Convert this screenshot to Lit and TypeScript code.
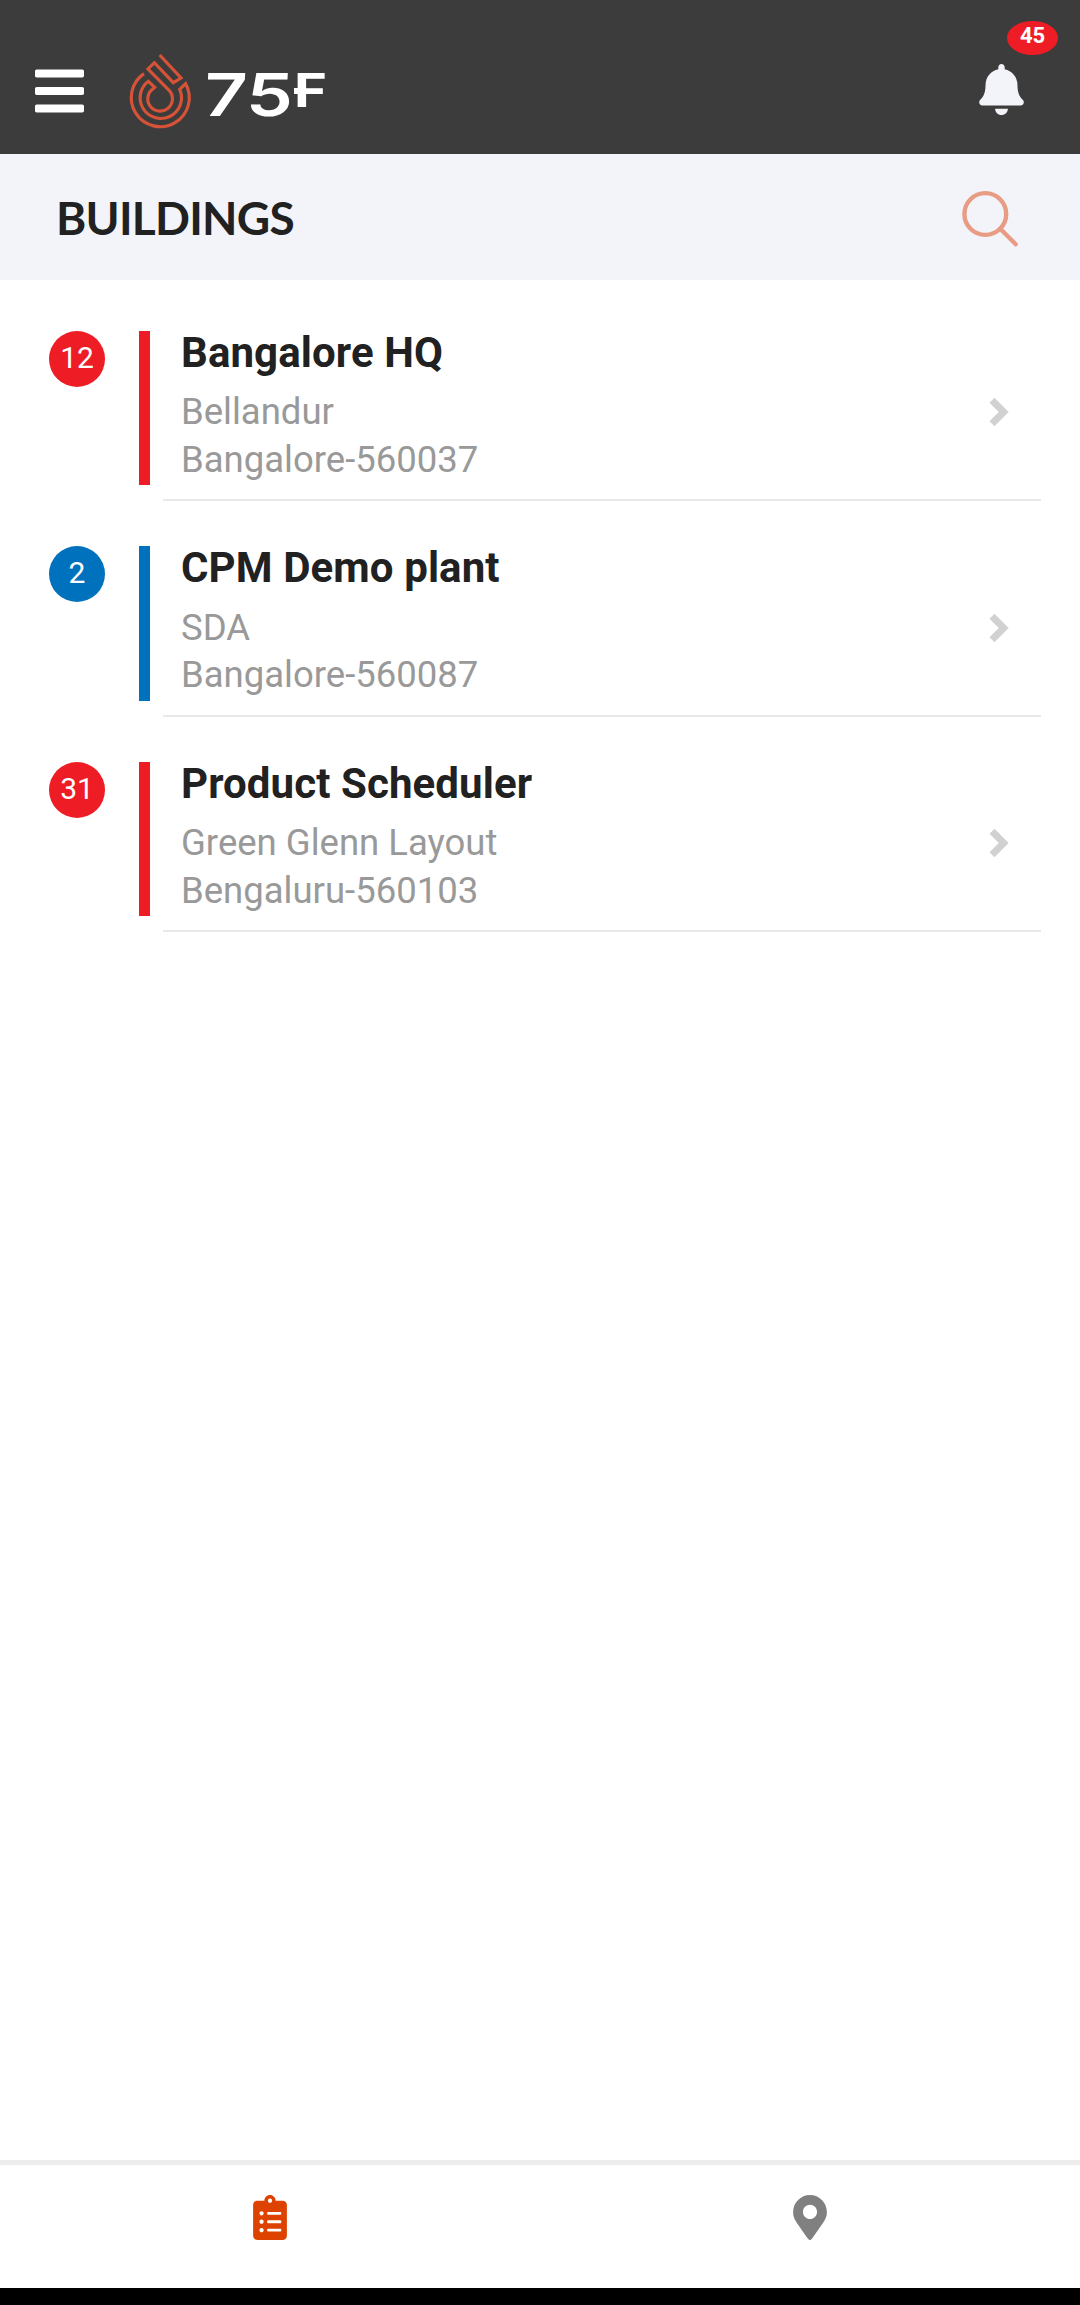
import { LitElement, html, css } from "lit";
import { customElement, property } from "lit/decorators.js";
import { classMap } from "lit/directives/class-map.js";

interface Building {
  alerts: number;
  severe: boolean;
  name: string;
  area: string;
  city: string;
}

const buildings: Building[] = [
  { alerts: 12, severe: true, name: "Bangalore HQ", area: "Bellandur", city: "Bangalore-560037" },
  { alerts: 2, severe: false, name: "CPM Demo plant", area: "SDA", city: "Bangalore-560087" },
  { alerts: 31, severe: true, name: "Product Scheduler", area: "Green Glenn Layout", city: "Bengaluru-560103" },
];

@customElement("app-header")
export class AppHeader extends LitElement {
  static styles = css`
    :host {
      display: flex;
      box-sizing: border-box;
      height: 154px;
      padding: 0 56px 0 35px;
      background: #3c3c3c;
      font-family: Roboto, sans-serif;
    }
    svg { display: block; }
    .menu { margin-top: 63px; width: 49px; height: 56px; }
    .drop { margin: 52px 0 0 43px; width: 68px; height: 80px; }
    .word { margin: 73px 0 0 12px; width: 122px; height: 46px; overflow: visible; }
    .digits { font: 600 59px Inter, sans-serif; fill: #fff; }
    .letter { font: 700 46.5px Inter, sans-serif; fill: #fff; }
    .alerts { position: relative; margin: 64px 0 0 auto; width: 45px; height: 51px; }
    .bell { width: 45px; height: 51px; }
    .count {
      position: absolute;
      left: 28px;
      top: -43px;
      width: 51px;
      height: 34px;
      line-height: 30px;
      border-radius: 50%;
      background: #ee1c25;
      color: #fff;
      font-size: 22px;
      font-weight: 700;
      text-align: center;
    }
  `;
  render() {
    return html`
      <svg class="menu" viewBox="0 0 448 512" fill="#fff">
        <path d="M16 132h416c8.837 0 16-7.163 16-16V76c0-8.837-7.163-16-16-16H16C7.163 60 0 67.163 0 76v40c0 8.837 7.163 16 16 16zm0 160h416c8.837 0 16-7.163 16-16v-40c0-8.837-7.163-16-16-16H16c-8.837 0-16 7.163-16 16v40c0 8.837 7.163 16 16 16zm0 160h416c8.837 0 16-7.163 16-16v-40c0-8.837-7.163-16-16-16H16c-8.837 0-16 7.163-16 16v40c0 8.837 7.163 16 16 16z"/>
      </svg>
      <svg class="drop" viewBox="381 156 204 240" fill="none" stroke="#d65338" stroke-width="9.5">
        <path d="M479 165L543 234L520 248L463 188L444 207L508 272A37 37 0 1 1 461 265L464 262L445 244A62 62 0 1 0 541 273L539 268L557 251A87 87 0 1 1 432 221"/>
      </svg>
      <svg class="word" viewBox="0 0 122 46">
        <text class="digits" transform="translate(-4 43) skewX(-3)" x="0" y="0" textLength="89" lengthAdjust="spacingAndGlyphs">75</text>
        <text class="letter" transform="translate(87 34)" x="0" y="0" textLength="33" lengthAdjust="spacingAndGlyphs">F</text>
        <rect x="87" y="15" width="8" height="6" fill="#fff"/>
      </svg>
      <div class="alerts">
        <svg class="bell" viewBox="0 0 448 512" fill="#f3f4f9">
          <path d="M224 512c35.32 0 63.97-28.65 63.97-64H160.03c0 35.35 28.65 64 63.97 64zm215.39-149.71c-19.32-20.76-55.47-51.99-55.47-154.29 0-77.7-54.48-139.9-127.94-155.16V32c0-17.67-14.32-32-31.98-32s-31.98 14.33-31.98 32v20.84C118.56 68.1 64.08 130.3 64.08 208c0 102.3-36.15 133.53-55.47 154.29-6 6.45-8.66 14.16-8.61 21.71.11 16.4 12.98 32 32.1 32h383.8c19.12 0 32-15.6 32.1-32 .05-7.55-2.61-15.27-8.61-21.71z"/>
        </svg>
        <span class="count">45</span>
      </div>
    `;
  }
}

@customElement("building-row")
export class BuildingRow extends LitElement {
  @property({ attribute: false }) building!: Building;
  static styles = css`
    :host {
      display: flex;
      box-sizing: border-box;
      height: 215.67px;
      padding: 45.67px 39px 0 49px;
      font-family: Roboto, sans-serif;
    }
    .badge {
      width: 56px;
      height: 56px;
      border-radius: 50%;
      background: #0071bc;
      color: #fff;
      font-size: 30px;
      line-height: 53px;
      text-align: center;
    }
    .bar { width: 11px; height: 154.5px; margin-left: 34px; background: #0071bc; }
    .severe { background: #ee1c25; }
    .body {
      flex: 1;
      display: flex;
      align-items: center;
      justify-content: space-between;
      box-sizing: border-box;
      height: 170.4px;
      margin-left: 13px;
      padding: 0 32px 0 18px;
      border-bottom: 2px solid #e9e9e9;
    }
    .text { align-self: flex-start; white-space: nowrap; }
    .name { font-size: 42px; font-weight: 700; line-height: 44.4px; letter-spacing: 0.1px; color: #212121; }
    .line { font-size: 36.5px; line-height: 47.5px; color: #999; }
    .area { margin-top: 13px; }
    .chevron { display: block; width: 20px; height: 30px; margin-top: -6px; }
  `;
  render() {
    const b = this.building;
    return html`
      <div class=${classMap({ badge: true, severe: b.severe })}>${b.alerts}</div>
      <div class=${classMap({ bar: true, severe: b.severe })}></div>
      <div class="body">
        <div class="text">
          <div class="name">${b.name}</div>
          <div class="line area">${b.area}</div>
          <div class="line">${b.city}</div>
        </div>
        <svg class="chevron" viewBox="0 0 20 30" fill="none" stroke="#d1d1d1" stroke-width="7">
          <path d="M3 3.300L14.700 15L3 26.700"/>
        </svg>
      </div>
    `;
  }
}

@customElement("app-root")
export class AppRoot extends LitElement {
  static styles = css`
    :host {
      display: flex;
      flex-direction: column;
      width: 1080px;
      height: 2305px;
      background: #fff;
    }
    .title {
      display: flex;
      align-items: center;
      justify-content: space-between;
      box-sizing: border-box;
      height: 126px;
      padding: 0 60px 0 56px;
      background: #f3f4f9;
    }
    h1 { margin: 2px 0 0; font: 700 46px/60px Lato, sans-serif; letter-spacing: -0.75px; color: #212121; }
    .search { display: block; width: 60px; height: 60px; }
    .list { flex: 1; padding-top: 5px; }
    .nav {
      display: grid;
      grid-template-columns: 1fr 1fr;
      justify-items: center;
      box-sizing: border-box;
      height: 128px;
      padding-top: 30px;
      border-top: 5px solid #ededed;
    }
    .nav-icon { display: block; width: 34px; height: 45px; }
    .system { height: 17px; background: #000; }
  `;
  render() {
    return html`
      <app-header></app-header>
      <div class="title">
        <h1>BUILDINGS</h1>
        <svg class="search" viewBox="960 187 60 60" fill="none" stroke="#e79c83" stroke-width="4.4" stroke-linecap="round">
          <circle cx="985.3" cy="214" r="20.9"/>
          <path d="M1001 229.5L1015.7 244.3"/>
        </svg>
      </div>
      <div class="list">
        ${buildings.map((b) => html`<building-row .building=${b}></building-row>`)}
      </div>
      <div class="nav">
        <svg class="nav-icon" viewBox="0 0 384 512" fill="#dd4200">
          <path d="M336 64h-80c0-35.3-28.7-64-64-64s-64 28.7-64 64H48C21.5 64 0 85.5 0 112v352c0 26.5 21.5 48 48 48h288c26.500 0 48-21.500 48-48V112c0-26.500-21.500-48-48-48zM96 424c-13.300 0-24-10.700-24-24s10.700-24 24-24 24 10.700 24 24-10.700 24-24 24zm0-96c-13.300 0-24-10.700-24-24s10.700-24 24-24 24 10.700 24 24-10.700 24-24 24zm0-96c-13.300 0-24-10.700-24-24s10.700-24 24-24 24 10.700 24 24-10.700 24-24 24zm96-192c13.300 0 24 10.700 24 24s-10.700 24-24 24-24-10.700-24-24 10.700-24 24-24zm128 368c0 4.400-3.600 8-8 8H168c-4.400 0-8-3.600-8-8v-16c0-4.400 3.600-8 8-8h144c4.400 0 8 3.600 8 8v16zm0-96c0 4.400-3.600 8-8 8H168c-4.400 0-8-3.600-8-8v-16c0-4.400 3.600-8 8-8h144c4.400 0 8 3.600 8 8v16zm0-96c0 4.400-3.600 8-8 8H168c-4.400 0-8-3.600-8-8v-16c0-4.400 3.600-8 8-8h144c4.400 0 8 3.600 8 8v16z"/>
        </svg>
        <svg class="nav-icon" viewBox="0 0 384 512" fill="#808080">
          <path d="M172.268 501.670C26.970 291.031 0 269.413 0 192 0 85.961 85.961 0 192 0s192 85.961 192 192c0 77.413-26.970 99.031-172.268 309.670-9.535 13.774-29.930 13.773-39.464 0zM192 272c44.183 0 80-35.817 80-80s-35.817-80-80-80-80 35.817-80 80 35.817 80 80 80z"/>
        </svg>
      </div>
      <div class="system"></div>
    `;
  }
}
